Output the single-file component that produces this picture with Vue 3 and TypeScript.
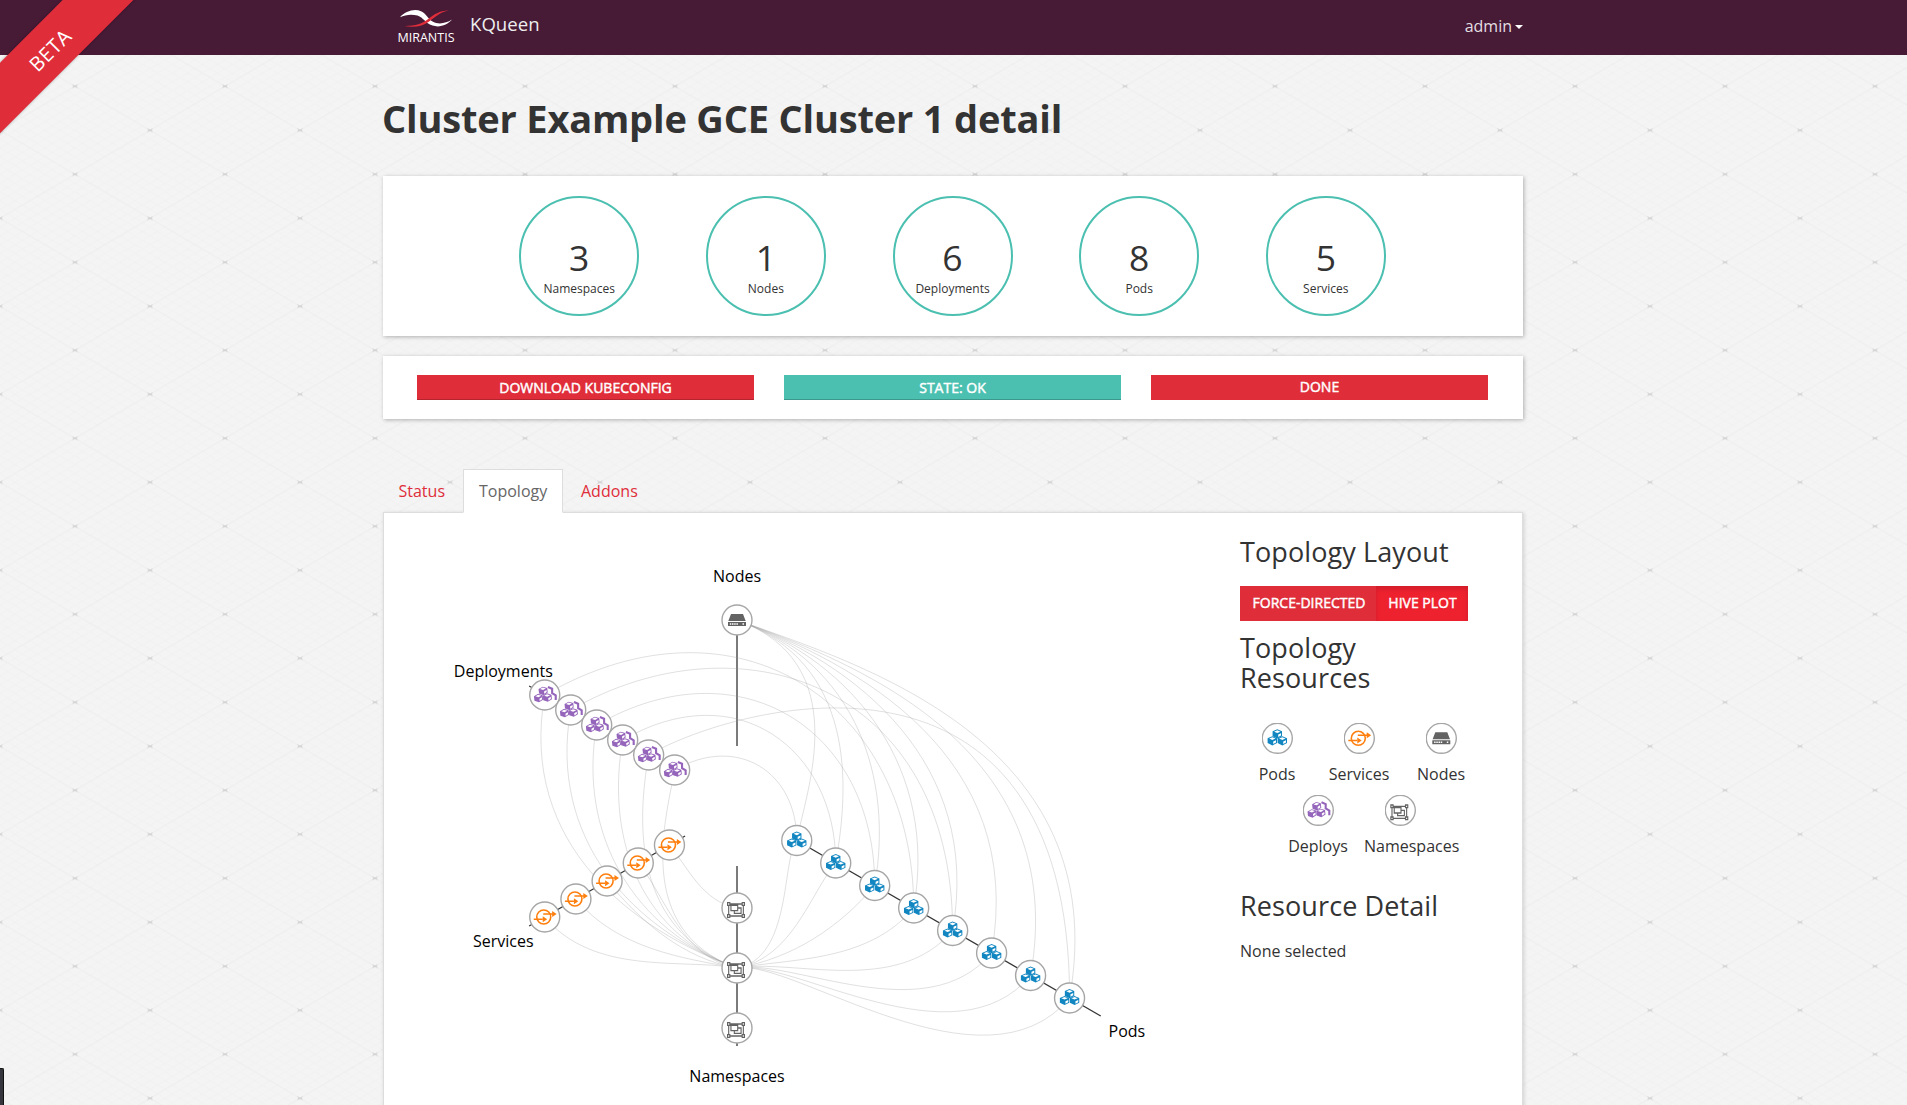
<script setup lang="ts">
type Kind = 'pod' | 'service' | 'node' | 'deploy' | 'namespace'

interface Polar {
  kind: Kind
  angle: number
  r: number
}

const CX = 737
const CY = 806
const rad = (deg: number) => (deg * Math.PI) / 180
const px = (angle: number, r: number) => CX + Math.cos(rad(angle)) * r
const py = (angle: number, r: number) => CY + Math.sin(rad(angle)) * r

// Axis directions in degrees, clockwise from the positive x axis
const POD = 30
const NS = 90
const SVC = 150
const DEP = 210
const NODE = 270

const series = (kind: Kind, angle: number, radii: number[]): Polar[] =>
  radii.map((r) => ({ kind, angle, r }))

const pods = series('pod', POD, [69, 114, 159, 204, 249, 294, 339, 384])
const namespaces = series('namespace', NS, [102, 162, 222])
const services = series('service', SVC, [222, 186, 150, 114, 78])
const deployments = series('deploy', DEP, [222, 192, 162, 132, 102, 72])
const host: Polar = { kind: 'node', angle: NODE, r: 186 }

const items: Polar[] = [...pods, ...namespaces, ...services, ...deployments, host]

function hive(a: Polar, b: Polar): string {
  let from = a
  let to = b
  if (to.angle < from.angle) [from, to] = [to, from]
  let start = from.angle
  const end = to.angle
  if (end - start > 180 || (from.kind === 'pod' && to.kind === 'deploy')) start += 360
  const third = (end - start) / 3
  const p = (angle: number, r: number) => `${px(angle, r).toFixed(1)},${py(angle, r).toFixed(1)}`
  return `M${p(start, from.r)}C${p(start + third, from.r)} ${p(end - third, to.r)} ${p(end, to.r)}`
}

const hub = namespaces[1]
const links: string[] = [
  ...pods.map((p) => hive(host, p)),
  ...pods.map((p) => hive(hub, p)),
  ...deployments.map((d) => hive(hub, d)),
  ...services.map((s, i) => hive(i === 4 ? namespaces[0] : hub, s)),
  ...[3, 4, 2, 1, 7, 0].map((pod, dep) => hive(deployments[dep], pods[pod])),
]

const axes = [
  { angle: NODE, from: 60, to: 186 },
  { angle: NS, from: 60, to: 240 },
  { angle: SVC, from: 60, to: 240 },
  { angle: DEP, from: 60, to: 240 },
  { angle: POD, from: 60, to: 420 },
]

const axisLabels = [
  { text: 'Nodes', x: 737, y: 582, anchor: 'middle' },
  { text: 'Deployments', x: 503.3, y: 677, anchor: 'middle' },
  { text: 'Services', x: 503.3, y: 947, anchor: 'middle' },
  { text: 'Namespaces', x: 737, y: 1082, anchor: 'middle' },
  { text: 'Pods', x: 1108.5, y: 1037, anchor: 'start' },
]

const stats = [
  { value: 3, label: 'Namespaces' },
  { value: 1, label: 'Nodes' },
  { value: 6, label: 'Deployments' },
  { value: 8, label: 'Pods' },
  { value: 5, label: 'Services' },
]

const legend: { kind: Kind; label: string }[][] = [
  [
    { kind: 'pod', label: 'Pods' },
    { kind: 'service', label: 'Services' },
    { kind: 'node', label: 'Nodes' },
  ],
  [
    { kind: 'deploy', label: 'Deploys' },
    { kind: 'namespace', label: 'Namespaces' },
  ],
]

const meshLines: string = Array.from({ length: 21 }, (_, i) => {
  const o = (i - 10) * 8.8
  return `M0 ${o}L150 ${o + 88}M0 ${o + 88}L150 ${o}`
}).join('')
</script>

<template>
  <div class="page">
    <svg class="backdrop" width="1907" height="1105" aria-hidden="true">
      <defs>
        <pattern id="mesh" width="150" height="88" patternUnits="userSpaceOnUse" patternTransform="translate(0 42.3)">
          <path :d="meshLines" class="mesh-fine" />
          <path d="M0 0L150 88M0 88L150 0" class="mesh-bold" />
          <path d="M72.5 42.7l5 2.6M72.5 45.3l5-2.6" class="mesh-mark" />
          <path
            d="M-2.5-1.3l5 2.6M-2.5 1.3l5-2.6M147.5-1.3l5 2.6M147.5 1.3l5-2.6M-2.5 86.7l5 2.6M-2.5 89.3l5-2.6M147.5 86.7l5 2.6M147.5 89.3l5-2.6"
            class="mesh-mark"
          />
        </pattern>
        <g id="cube">
          <path d="M0-4.500L4.700-2.500V2.400L0 4.700L-4.700 2.400V-2.500Z" />
          <path fill="#fff" d="M0-3.500L3.200-2.150L0-.8L-3.200-2.150ZM.9 .8L3.700-.5V1.800L.9 3.300Z" />
        </g>
        <g id="icon-pod" class="pod-fill">
          <use href="#cube" x="0" y="-4.500" />
          <use href="#cube" x="-5" y="2.400" />
          <use href="#cube" x="5" y="2.400" />
        </g>
        <g id="icon-deploy">
          <g class="deploy-fill">
            <use href="#cube" transform="translate(-1.600 -4.200) rotate(-6) scale(.93)" />
            <use href="#cube" transform="translate(-6.200 3) rotate(-6) scale(.93)" />
            <use href="#cube" transform="translate(2.600 2.500) rotate(-6) scale(.93)" />
          </g>
          <path class="deploy-line" d="M3.200-8L7.400-6.200V-1.800L11 .3V5" />
        </g>
        <g id="icon-service">
          <circle class="svc-line" cx="-1" cy="0" r="7" />
          <path class="svc-line" d="M-1.5-3H8M-11 2.2H-2" />
          <path class="svc-fill" d="M7.4-6l4.5 3-4.5 3zM-2-.8l4.4 3-4.4 3z" />
        </g>
        <g id="icon-node">
          <path class="node-fill" d="M-6-6H6L8.7 1H-8.7zM-9 2H9V6H-9z" />
          <path class="node-dots" d="M-7.2 4H1.5M5.5 4H7" />
        </g>
        <g id="icon-namespace">
          <path
            class="ns-fill"
            transform="translate(-10 -7.3) scale(.0088 .0104)"
            d="M2048 512h-128v768h128v384h-384v-128h-1280v128h-384v-384h128v-768h-128v-384h384v128h1280v-128h384v384zM1792 256v128h128v-128h-128zM128 256v128h128v-128h-128zM256 1536v-128h-128v128h128zM1664 1408v-128h128v-768h-128v-128h-1280v128h-128v768h128v128h1280zM1920 1536v-128h-128v128h128zM1280 640h384v640h-896v-256h-384v-640h896v256zM512 896h640v-384h-640v384zM1536 1152v-384h-256v256h-384v128h640z"
          />
        </g>
      </defs>
      <rect width="1907" height="1105" fill="url(#mesh)" />
    </svg>

    <header class="navbar">
      <div class="container nav-inner">
        <a class="brand">
          <svg class="logo" width="60" height="40" viewBox="0 0 60 40">
            <path fill="#fff" d="M3 9.2C8 3.500 17 .2 24 3.200C29.500 5.600 31 11 36 13.800C41.500 16.800 49 15.500 55 11.600C50.500 17.200 42.500 19.800 35.500 17.600C28 15.200 26.500 9.600 20.500 7.600C14.500 5.800 8.500 6.600 3 9.200Z" />
            <path fill="#e02d3a" d="M52 2.200C42 3 37 6.200 31.500 10.800C25 16 18 18.200 7 18C18 20 25.500 18.200 32.500 13.200C38.500 8.600 42.500 4.600 52 2.200Z" />
            <text x="0.500" y="34.300" textLength="57" lengthAdjust="spacingAndGlyphs">MIRANTIS</text>
          </svg>
          <span class="product">KQueen</span>
        </a>
        <a class="user">admin<i class="caret"></i></a>
      </div>
    </header>
    <div class="ribbon">BETA</div>

    <main class="container">
      <h1>Cluster Example GCE Cluster 1 detail</h1>

      <section class="card stats">
        <div v-for="s in stats" :key="s.label" class="stat-col">
          <div class="stat">
            <span class="value">{{ s.value }}</span>
            <span class="label">{{ s.label }}</span>
          </div>
        </div>
      </section>

      <section class="card actions">
        <button class="btn raised">DOWNLOAD KUBECONFIG</button>
        <button class="btn raised ok">STATE: OK</button>
        <button class="btn">DONE</button>
      </section>

      <nav class="tabs">
        <a class="tab tab-status">Status</a>
        <a class="tab active">Topology</a>
        <a class="tab">Addons</a>
      </nav>

      <section class="panel">
        <svg class="graph" width="856" height="592" viewBox="384 513 856 592">
          <line
            v-for="a in axes"
            :key="a.angle"
            class="axis"
            :x1="px(a.angle, a.from)"
            :y1="py(a.angle, a.from)"
            :x2="px(a.angle, a.to)"
            :y2="py(a.angle, a.to)"
          />
          <path v-for="(d, i) in links" :key="i" class="link" :d="d" />
          <g v-for="(n, i) in items" :key="'n' + i" :transform="`translate(${px(n.angle, n.r)} ${py(n.angle, n.r)})`">
            <circle class="disc" r="15" />
            <use :href="'#icon-' + n.kind" />
          </g>
          <text v-for="l in axisLabels" :key="l.text" class="axis-label" :x="l.x" :y="l.y" :text-anchor="l.anchor">{{ l.text }}</text>
        </svg>

        <aside class="side">
          <h3 class="h-layout">Topology Layout</h3>
          <div class="toggle">
            <button class="btn seg-force">FORCE-DIRECTED</button>
            <button class="btn seg-hive">HIVE PLOT</button>
          </div>
          <h3 class="h-resources">Topology<br />Resources</h3>
          <div class="legend">
            <div v-for="(row, i) in legend" :key="i" class="legend-row">
              <div v-for="item in row" :key="item.kind" class="legend-item">
                <svg width="31" height="31" viewBox="-15.300 -15.300 31 31">
                  <circle class="disc" r="15" />
                  <use :href="'#icon-' + item.kind" />
                </svg>
                <span>{{ item.label }}</span>
              </div>
            </div>
          </div>
          <h3 class="h-detail">Resource Detail</h3>
          <p>None selected</p>
        </aside>
      </section>
    </main>
    <div class="corner"></div>
  </div>
</template>

<style>
body {
  margin: 0;
  overflow: hidden;
}
</style>

<style scoped>
.page {
  position: relative;
  height: 1105px;
  overflow: hidden;
  background: #f4f4f4;
  color: #333;
  font-family: 'Open Sans', 'Noto Sans', sans-serif;
  font-size: 16px;
}
.backdrop {
  position: absolute;
  inset: 0;
}
.mesh-fine {
  stroke: #f0f0f0;
  stroke-width: 0.8;
  fill: none;
}
.mesh-bold {
  stroke: #ededed;
  stroke-width: 1;
  fill: none;
}
.mesh-mark {
  stroke: #cccccc;
  stroke-width: 1;
  fill: none;
}
.container {
  position: relative;
  width: 1140px;
  margin: 0 auto;
  left: -0.5px;
}
.navbar {
  position: relative;
  height: 55px;
  background: #471a36;
}
.nav-inner {
  display: flex;
  justify-content: space-between;
}
.brand {
  display: flex;
  padding-left: 14px;
}
.logo {
  margin-top: 8px;
}
.logo text {
  font-family: 'Open Sans', sans-serif;
  font-size: 12.5px;
  fill: #fff;
}
.product {
  margin-left: 13px;
  font-size: 18.6px;
  line-height: 24px;
  margin-top: 12px;
  color: #eee;
}
.user {
  display: flex;
  align-items: center;
  height: 23px;
  margin-top: 14px;
  color: #e4dfe2;
}
.caret {
  margin-left: 3px;
  margin-top: 3px;
  border: 4px solid transparent;
  border-top-color: #fff;
  border-bottom: 0;
}
.ribbon {
  position: absolute;
  left: -51px;
  top: 24px;
  width: 200px;
  height: 50px;
  line-height: 53px;
  box-sizing: border-box;
  transform: rotate(-45deg);
  background: #e02d3a;
  color: #fff;
  text-align: center;
  font-size: 20px;
  letter-spacing: 0.5px;
  box-shadow: 0 0 3px rgba(0, 0, 0, 0.3);
}
h1 {
  margin: 42px 0 0;
  height: 79px;
  font-size: 38px;
  line-height: 42px;
  font-weight: 700;
  letter-spacing: -0.18px;
  text-indent: -1px;
  white-space: nowrap;
}
.card {
  background: #fff;
  box-shadow: 1px 1px 4px rgba(0, 0, 0, 0.28);
}
.stats {
  display: flex;
  justify-content: center;
  height: 160px;
  box-sizing: border-box;
  padding: 20px 1px 20px 0;
}
.stat-col {
  display: flex;
  justify-content: center;
  width: 186.67px;
}
.stat {
  display: flex;
  flex-direction: column;
  align-items: center;
  width: 120px;
  height: 120px;
  box-sizing: border-box;
  border: 2px solid #4bbfb0;
  border-radius: 50%;
}
.value {
  margin-top: 37px;
  font-size: 35.5px;
  line-height: 44px;
}
.label {
  margin-top: 1px;
  font-size: 12px;
  line-height: 17px;
}
.actions {
  display: flex;
  gap: 30px;
  height: 63px;
  margin-top: 20px;
  box-sizing: border-box;
  padding: 19px 35px 19px 34px;
}
.btn {
  flex: 1;
  border: 0;
  margin: 0;
  padding: 0 0 1px;
  background: #e02d3a;
  color: #fff;
  font: 400 14px/22px 'Open Sans', sans-serif;
  -webkit-text-stroke: 0.45px #fff;
}
.raised {
  padding: 1px 0 0;
  box-shadow: inset 0 -1px 0 rgba(0, 0, 0, 0.2);
}
.ok {
  background: #4bbfb0;
}
.tabs {
  display: flex;
  gap: 2px;
  margin-top: 50px;
  height: 43px;
}
.tab {
  box-sizing: border-box;
  height: 44px;
  padding: 10px 15px;
  border: 1px solid transparent;
  line-height: 23px;
  color: #e02d3a;
}
.tab-status {
  width: 78px;
  padding-left: 14.5px;
}
.tab.active {
  position: relative;
  z-index: 1;
  width: 100px;
  background: #fff;
  border-color: #ddd;
  border-bottom-color: #fff;
  color: #666;
}
.panel {
  display: flex;
  height: 640px;
  box-sizing: border-box;
  border: 1px solid #ddd;
  background: #fff;
  box-shadow: 1px 1px 4px rgba(0, 0, 0, 0.15);
}
.graph {
  flex: none;
}
.axis {
  stroke: #333;
  stroke-width: 1.3;
}
.link {
  fill: none;
  stroke: #999;
  stroke-opacity: 0.3;
}
.disc {
  fill: #fff;
  stroke: #a6a6a6;
  stroke-width: 1.4;
}
.axis-label {
  fill: #000;
}
.pod-fill {
  fill: #1186c1;
}
.deploy-fill {
  fill: #9565bb;
}
.deploy-line {
  fill: none;
  stroke: #9565bb;
  stroke-width: 2.1;
}
.svc-fill {
  fill: #ff7f0e;
}
.svc-line {
  fill: none;
  stroke: #ff7f0e;
  stroke-width: 1.6;
}
.node-fill {
  fill: #636363;
}
.node-dots {
  fill: none;
  stroke: #fff;
  stroke-width: 1.4;
  stroke-dasharray: 1.5 0.7;
}
.ns-fill {
  fill: #636363;
}
.side {
  width: 246px;
}
h3 {
  margin: 0;
  font-size: 27px;
  line-height: 30px;
  font-weight: 400;
  letter-spacing: 0.1px;
}
.h-layout {
  margin-top: 24px;
}
.toggle {
  display: flex;
  width: 228px;
  height: 35px;
  margin-top: 19px;
}
.seg-force {
  flex: 0 0 136px;
  padding-left: 2px;
}
.seg-hive {
  padding-left: 1px;
  background: #ee212f;
  box-shadow: inset 0 3px 5px rgba(0, 0, 0, 0.125);
}
.h-resources {
  margin-top: 12px;
}
.legend {
  margin-top: 30px;
}
.legend-row {
  display: flex;
  justify-content: center;
  width: 246px;
  height: 72px;
  margin-left: -4px;
}
.legend-item {
  display: flex;
  flex-direction: column;
  width: 72px;
  padding: 0 5px;
}
.legend-item svg {
  align-self: center;
}
.legend-item span {
  min-width: 100%;
  width: max-content;
  margin-top: 9px;
  line-height: 23px;
  text-align: center;
}
.h-detail {
  margin-top: 24px;
}
p {
  margin: 19px 0 0;
  line-height: 23px;
}
.corner {
  position: absolute;
  left: 0;
  top: 1068px;
  width: 4px;
  height: 37px;
  box-sizing: border-box;
  border: solid #111;
  border-width: 1px 1px 0 0;
  border-top-right-radius: 2px;
  background: #35353d;
}
</style>
